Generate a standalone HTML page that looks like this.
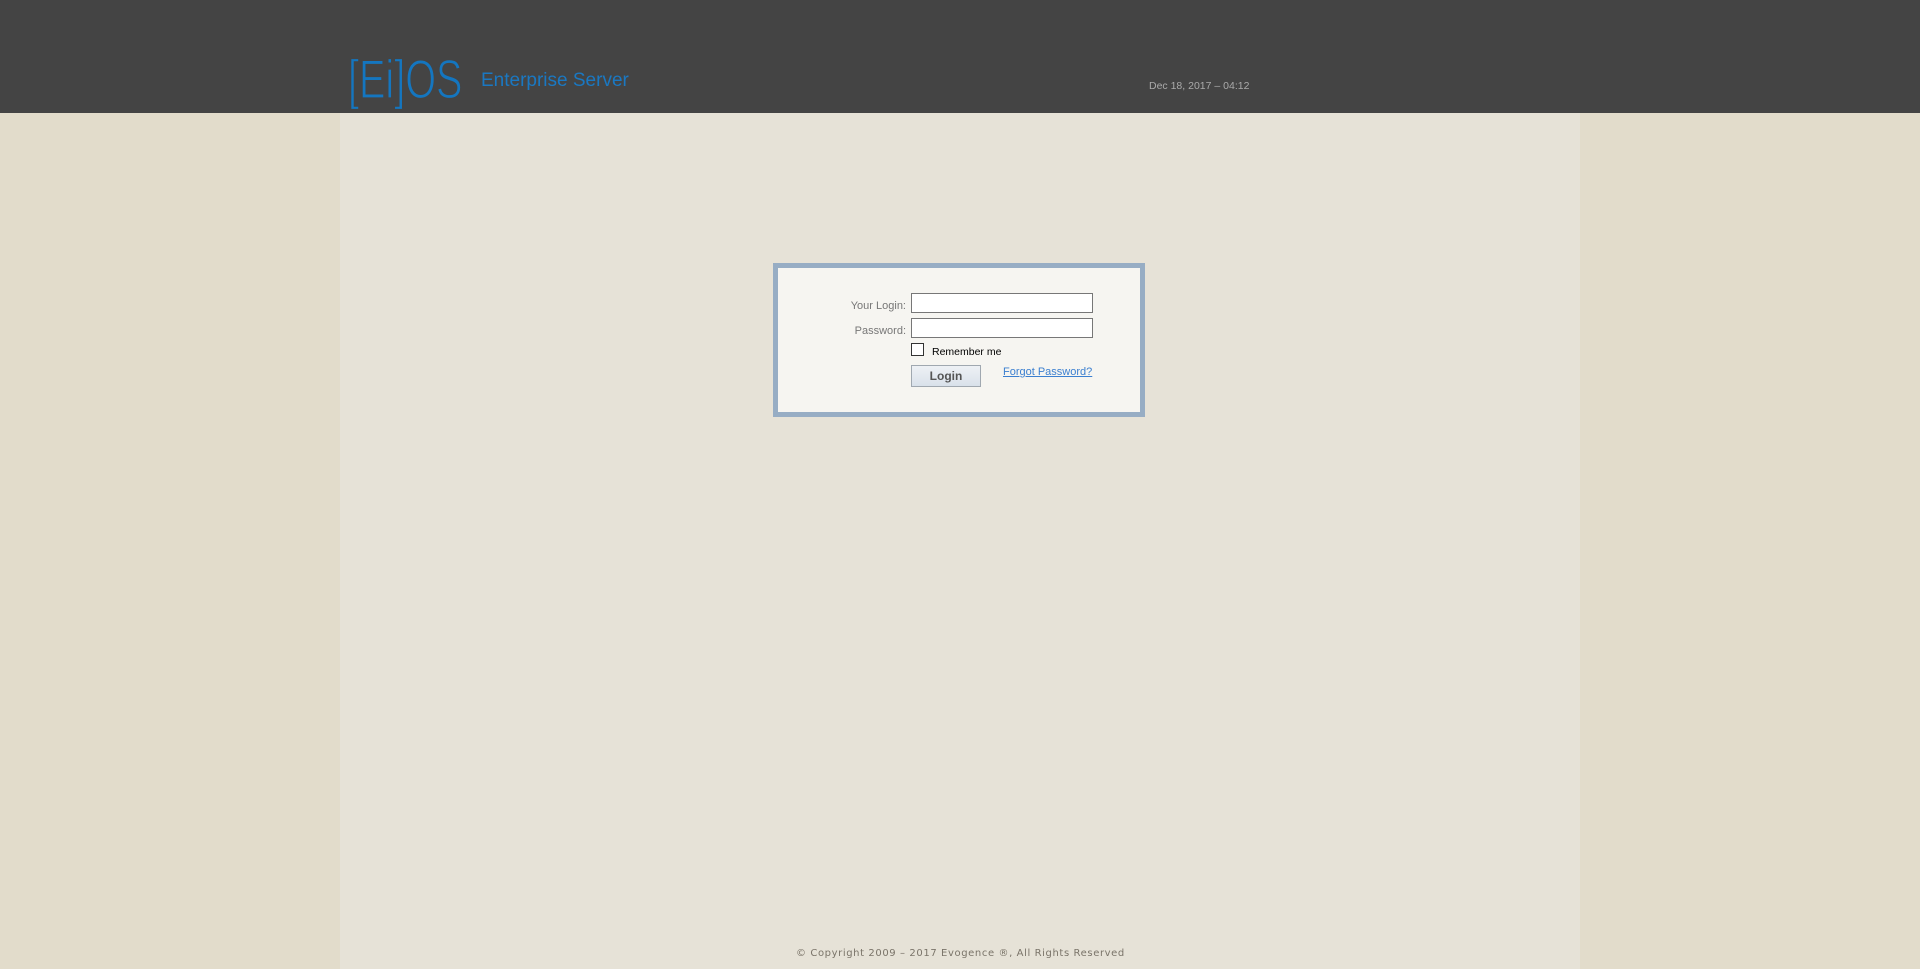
<!DOCTYPE html>
<html><head><meta charset="utf-8"><style>
body{margin:0;width:1920px;height:969px;background:#e2dccb;font-family:"Liberation Sans",Arial,sans-serif;position:relative;overflow:hidden}
#hdr{position:absolute;left:0;top:0;width:1920px;height:113px;background:#444}
#col{position:absolute;left:340px;top:113px;width:1240px;height:856px;background:#e6e2d7}
.logo{position:absolute;left:348px;top:49px;font-family:"Liberation Sans",sans-serif;font-size:55px;color:#1476c0;line-height:60px;transform:scaleX(0.72);transform-origin:0 0;white-space:nowrap;-webkit-text-stroke:1.3px #444}
.es{position:absolute;left:481px;top:70px;font-size:19px;color:#1a78c2}
.date{position:absolute;left:1149px;top:80px;font-size:10.5px;color:#aaa}
#box{position:absolute;left:773px;top:263px;width:362px;height:144px;border:5px solid #97adc4;background:#f6f5f1}
.lbl{position:absolute;font-size:11px;color:#777;text-align:right;width:120px}
.inp{position:absolute;left:133px;width:180px;height:18px;border:1px solid #777;background:#fff}
.cb{position:absolute;left:133px;top:75px;width:11px;height:11px;border:1px solid #333;background:#fff}
.rm{position:absolute;left:154px;top:78px;font-size:10.5px;color:#000}
.btn{position:absolute;left:133px;top:97px;width:68px;height:20px;border:1px solid #a0a8b0;background:linear-gradient(#eef1f5,#d9e1ea);font-size:12px;font-weight:bold;color:#555;text-align:center;line-height:20px}
.fp{position:absolute;left:225px;top:98px;font-size:11px;color:#3b7fd0;text-decoration:underline}
.ft{position:absolute;left:796px;top:948px;font-family:"DejaVu Sans",Verdana,sans-serif;font-size:10px;color:#7a7469;letter-spacing:0.6px}
</style></head><body>
<div id="hdr"></div><div id="col"></div>
<div class="logo">[Ei]OS</div>
<div class="es">Enterprise Server</div>
<div class="date">Dec 18, 2017 – 04:12</div>
<div id="box">
<div class="lbl" style="left:8px;top:32px">Your Login:</div>
<div class="inp" style="top:25px"></div>
<div class="lbl" style="left:8px;top:57px">Password:</div>
<div class="inp" style="top:50px"></div>
<div class="cb"></div><div class="rm">Remember me</div>
<div class="btn">Login</div>
<div class="fp">Forgot Password?</div>
</div>
<div class="ft">© Copyright 2009 – 2017 Evogence ®, All Rights Reserved</div>
</body></html>
